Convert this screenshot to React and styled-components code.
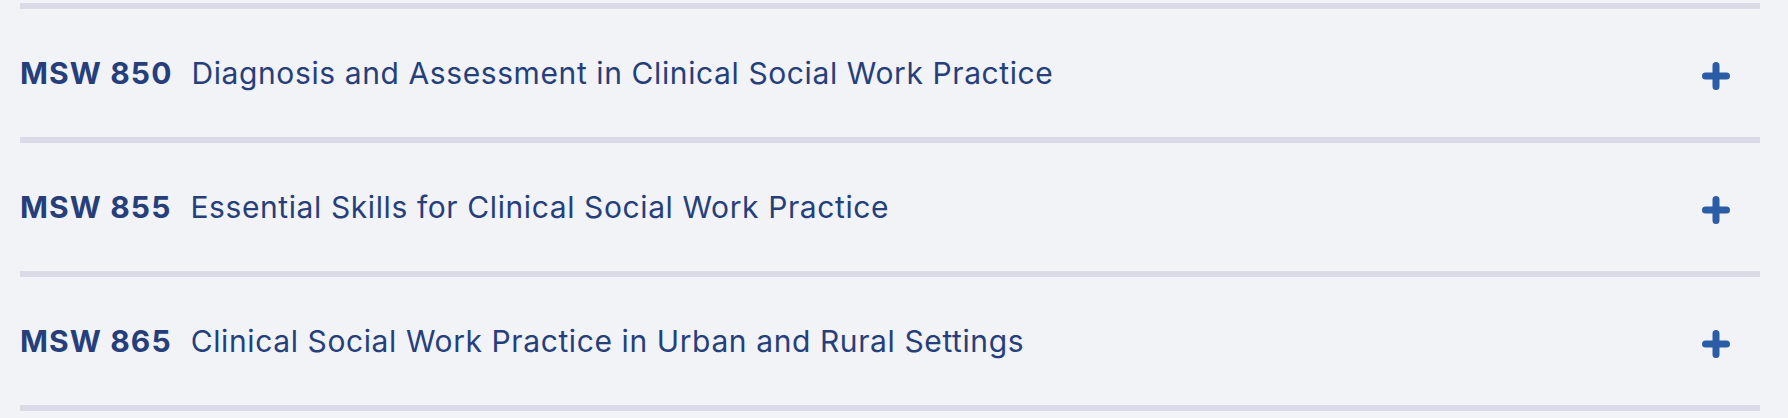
import * as React from 'react';
import styled, { createGlobalStyle } from 'styled-components';

const GlobalStyle = createGlobalStyle`
  html, body {
    margin: 0;
    padding: 0;
    background: #f1f3f7;
  }
  body {
    font-family: Inter, "Open Sans", sans-serif;
  }
`;

const courses = [
  { code: 'MSW 850', title: 'Diagnosis and Assessment in Clinical Social Work Practice' },
  { code: 'MSW 855', title: 'Essential Skills for Clinical Social Work Practice' },
  { code: 'MSW 865', title: 'Clinical Social Work Practice in Urban and Rural Settings' },
];

const List = styled.div`
  padding: 3px 28px 0 20px;
  height: 418px;
  box-sizing: border-box;
`;

const Item = styled.div`
  border-top: 6px solid #d9dbe6;
`;

const Header = styled.div`
  display: flex;
  align-items: center;
  height: 128px;
  padding-right: 30px;
  color: #263f7b;
  cursor: pointer;
`;

const Code = styled.span`
  font-weight: 700;
  font-size: 30px;
  letter-spacing: 1.1px;
  white-space: nowrap;
`;

const Title = styled.span`
  flex: 1;
  margin-left: 19px;
  font-size: 30px;
  font-weight: 400;
  letter-spacing: 0.6px;
  white-space: nowrap;
`;

const Toggle = styled.svg`
  width: 28px;
  height: 28px;
  margin-top: 6px;
  flex-shrink: 0;
`;

const PlusIcon = () => (
  <Toggle viewBox="0 0 28 28" aria-hidden="true">
    <path d="M14 3.5v21M3.5 14h21" stroke="#2b5ca6" strokeWidth="7" strokeLinecap="round" fill="none" />
  </Toggle>
);

const App = () => (
  <>
    <GlobalStyle />
    <List>
      {courses.map((course) => (
        <Item key={course.code}>
          <Header>
            <Code>{course.code}</Code>
            <Title>{course.title}</Title>
            <PlusIcon />
          </Header>
        </Item>
      ))}
      <Item />
    </List>
  </>
);

export default App;
